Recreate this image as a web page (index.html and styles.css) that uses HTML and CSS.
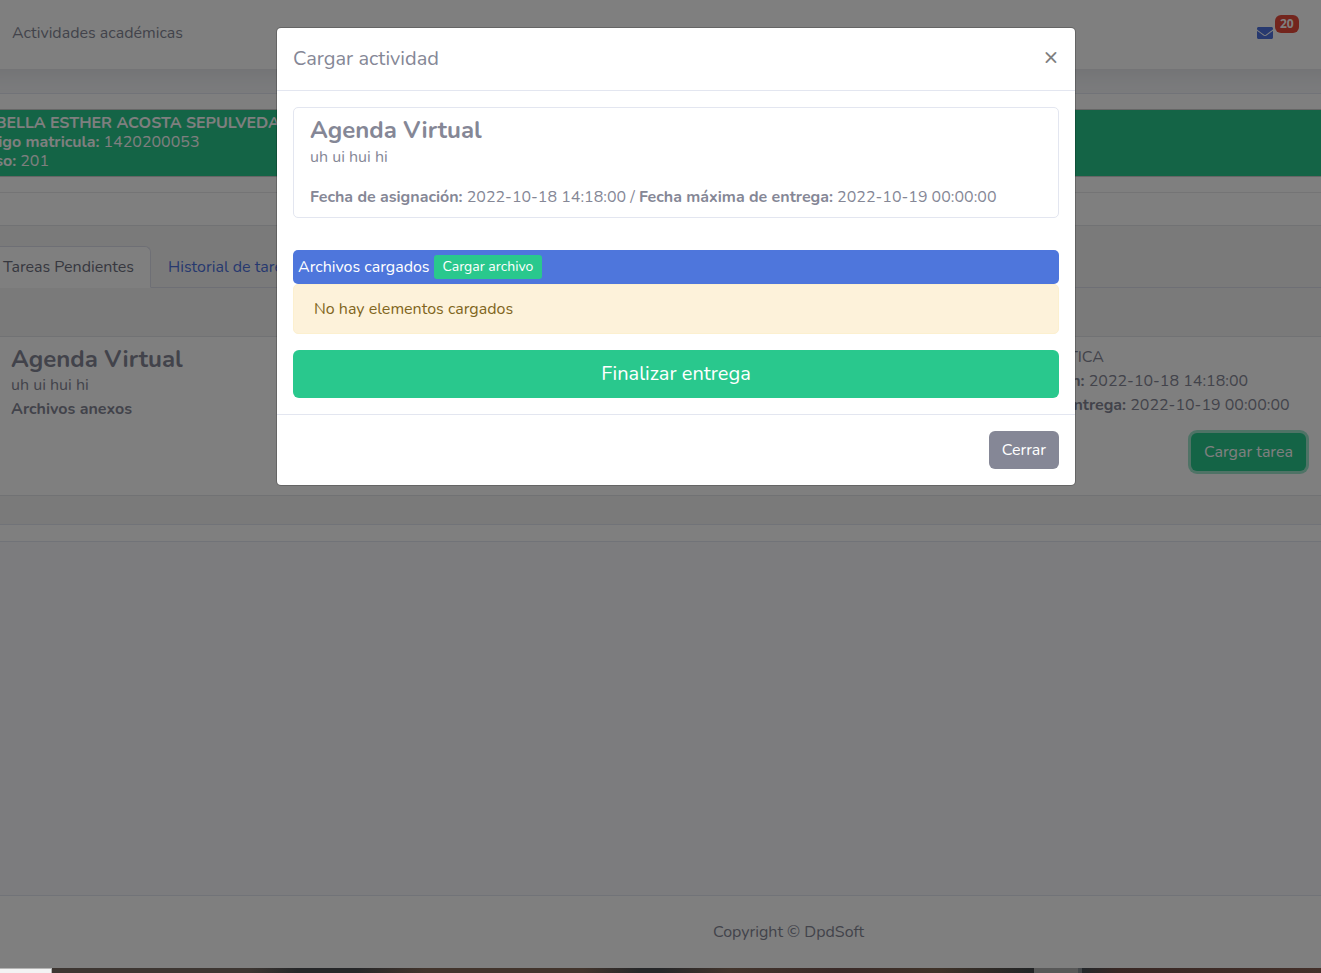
FILE: index.html
```html
<!DOCTYPE html>
<html lang="es">

<head>
    <meta charset="UTF-8">
    <meta name="viewport" content="width=device-width, initial-scale=1.0">
    <title>Actividades académicas</title>
    <link rel="stylesheet" href="styles.css">
</head>

<body>

    <div class="screen">
        <nav class="topbar">
            <span>Actividades académicas</span>
            <a href="#" class="messages" aria-label="Mensajes">
                <svg width="16" height="12" viewBox="0 0 512 384" aria-hidden="true">
                    <path fill="currentColor" d="M502.300 126.800c3.900-3.100 9.700-.2 9.700 4.700V336c0 26.500-21.500 48-48 48H48c-26.500 0-48-21.500-48-48V131.600c0-5 5.700-7.800 9.700-4.700 22.400 17.400 52.100 39.500 154.100 113.600 21.100 15.400 56.700 47.800 92.200 47.600 35.700.3 72-32.800 92.300-47.600 102-74.100 131.600-96.300 154-113.700zM256 256c23.200.4 56.600-29.200 73.400-41.400 132.700-96.300 142.800-104.700 173.400-128.700 5.800-4.500 9.200-11.500 9.200-18.900V48c0-26.500-21.500-48-48-48H48C21.500 0 0 21.500 0 48v19c0 7.400 3.400 14.300 9.200 18.900 30.600 23.900 40.700 32.400 173.400 128.700 16.800 12.200 50.200 41.800 73.400 41.400z"/>
                </svg>
                <span class="badge">20</span>
            </a>
        </nav>

        <main class="content">
            <div class="student-wrap">
                <div class="student">
                    <div><strong>ISABELLA ESTHER ACOSTA SEPULVEDA</strong></div>
                    <div><strong>Código matricula:</strong> 1420200053</div>
                    <div><strong>Curso:</strong> 201</div>
                </div>
            </div>
            <div class="spacer"></div>
            <div class="tasks">
                <div class="tabs">
                    <a href="#" class="tab active">Tareas Pendientes</a>
                    <a href="#" class="tab">Historial de tareas</a>
                </div>
                <div class="task">
                    <div>
                        <h4 class="task-title">Agenda Virtual</h4>
                        <div>uh ui hui hi</div>
                        <strong>Archivos anexos</strong>
                    </div>
                    <div class="task-info">
                        <div><strong>Materia :</strong> MATEMÁTICA</div>
                        <div><strong>Fecha de asignación:</strong> 2022-10-18 14:18:00</div>
                        <div><strong>Fecha máxima de entrega:</strong> 2022-10-19 00:00:00</div>
                        <button type="button" class="btn btn-success focus">Cargar tarea</button>
                    </div>
                </div>
            </div>
            <div class="card-end"></div>
        </main>

        <footer class="footer">Copyright © DpdSoft</footer>

        <div class="backdrop">
            <div class="modal" role="dialog" aria-labelledby="modal-title">
                <div class="modal-header">
                    <h5 id="modal-title" class="modal-title">Cargar actividad</h5>
                    <button type="button" class="close" aria-label="Close">×</button>
                </div>
                <div class="modal-body">
                    <div class="card">
                        <h4 class="task-title">Agenda Virtual</h4>
                        <div>uh ui hui hi</div>
                        <p class="dates"><strong>Fecha de asignación:</strong> 2022-10-18 14:18:00 / <strong>Fecha máxima de entrega:</strong> 2022-10-19 00:00:00</p>
                    </div>
                    <div class="files">
                        <span>Archivos cargados</span>
                        <button type="button" class="btn btn-success btn-sm">Cargar archivo</button>
                    </div>
                    <div class="alert">No hay elementos cargados</div>
                    <button type="button" class="btn btn-success btn-lg">Finalizar entrega</button>
                </div>
                <div class="modal-footer">
                    <button type="button" class="btn btn-secondary">Cerrar</button>
                </div>
            </div>
        </div>
    </div>

    <div class="taskbar">
        <div class="taskbar-search"></div>
        <div class="taskbar-apps"></div>
        <div class="taskbar-active"></div>
        <div class="taskbar-tray"></div>
    </div>

</body>

</html>
```

FILE: styles.css
```css
* {
    box-sizing: border-box;
}

body {
    margin: 0;
    height: 100vh;
    display: flex;
    flex-direction: column;
    overflow: hidden;
    font-family: Nunito, Lato, sans-serif;
    font-size: 16px;
    line-height: 24px;
    color: #858796;
    background: #f8f9fc;
}

h4,
h5,
p {
    margin: 0;
}

a {
    color: #4e73df;
    text-decoration: none;
}

.screen {
    position: relative;
    flex: 1;
    display: flex;
    flex-direction: column;
}

/* barra superior */
.topbar {
    display: flex;
    justify-content: space-between;
    padding: 21px 48px 24px 12px;
    background: #fff;
    box-shadow: 0 -26px 28px 28px rgba(58, 59, 69, 0.15);
}

.messages {
    position: relative;
    display: flex;
    align-items: center;
}

.badge {
    position: absolute;
    left: 18px;
    top: -6px;
    padding: 0 5px;
    border-radius: 6px;
    font-size: 12px;
    line-height: 18px;
    font-weight: bold;
    font-family: "Open Sans", sans-serif;
    color: #fff;
    background: #e74a3b;
}

/* contenido */
.content {
    flex: 1;
    margin-top: 24px;
}

.student-wrap {
    padding: 15px 0;
    background: #fff;
    border-top: 1px solid #e3e6f0;
    border-bottom: 1px solid #e8e8ea;
}

.student {
    margin-left: -31px;
    padding: 4px 0 5px;
    border: solid rgba(0, 0, 0, 0.2);
    border-width: 1px 0;
    line-height: 19px;
    color: #fff;
    background: #29c88d;
    background-clip: padding-box;
}

.spacer {
    height: 33px;
    background: #fff;
    border-bottom: 1px solid #e3e4e8;
}

.tasks {
    padding: 20px 0 28px;
    background: #f5f5f5;
}

.tabs {
    display: flex;
    margin-bottom: 48px;
    border-bottom: 1px solid #dddfeb;
}

.tab {
    padding: 8px 16px;
    margin-bottom: -1px;
    border: 1px solid transparent;
    border-radius: 0 6px 0 0;
}

.tab.active {
    padding-left: 3px;
    color: #6e707e;
    background: #fff;
    border-color: #dddfeb #dddfeb #fff;
    border-left: 0;
}

.task {
    display: flex;
    justify-content: space-between;
    padding: 8px 15px 24px 11px;
    background: #fff;
    border: solid #e3e4e8;
    border-width: 1px 0;
}

.task-title {
    font-size: 24px;
    line-height: 29px;
}

.task .task-title {
    line-height: 28px;
}

.task-info {
    display: flex;
    flex-direction: column;
    width: 374px;
}

.task-info .btn {
    align-self: flex-end;
    margin-top: 16px;
}

.card-end {
    height: 18px;
    background: #fff;
    border: solid #e3e6f0;
    border-width: 1px 0;
}

.footer {
    padding: 24px 0 24px 256px;
    text-align: center;
    background: #fff;
    border-top: 1px solid #e3e6f0;
}

/* botones */
.btn {
    padding: 6px 12px;
    border: 1px solid transparent;
    border-radius: 6px;
    font: inherit;
    color: #fff;
    cursor: pointer;
}

.btn-success {
    background: #29c88d;
}

.btn-secondary {
    background: #858796;
}

.btn-sm {
    padding: 0 8px;
    border-radius: 3px;
    font-size: 14px;
    line-height: 22px;
}

.btn-lg {
    width: 100%;
    padding: 8px 16px;
    font-size: 20px;
    line-height: 30px;
}

.btn.focus {
    box-shadow: 0 0 0 3px rgba(62, 208, 156, 0.5);
}

/* modal */
.backdrop {
    position: absolute;
    inset: 0;
    padding: 27px 0 0 31px;
    background: rgba(0, 0, 0, 0.5);
}

.modal {
    max-width: 800px;
    margin: 0 auto;
    background: #fff;
    background-clip: padding-box;
    border: 1px solid rgba(0, 0, 0, 0.2);
    border-radius: 5px;
}

.modal-header {
    display: flex;
    justify-content: space-between;
    padding: 16px;
    border-bottom: 1px solid #e3e6f0;
}

.modal-title {
    font-size: 20px;
    line-height: 30px;
    font-weight: normal;
}

.close {
    align-self: flex-start;
    padding: 0;
    width: 16px;
    border: 0;
    background: none;
    font: 600 24px/24px Nunito, Lato, sans-serif;
    color: #7f7f7f;
    cursor: pointer;
}

.modal-body {
    padding: 16px;
}

.card {
    padding: 8px 16px;
    border: 1px solid #e3e6f0;
    border-radius: 5px;
}

.dates {
    margin-top: 16px;
}

.files {
    display: flex;
    align-items: center;
    gap: 4px;
    margin-top: 32px;
    padding: 5px;
    border-radius: 5px;
    color: #fff;
    background: #4e76dc;
}

.alert {
    margin-bottom: 16px;
    padding: 12px 20px;
    border: 1px solid #fcf0cf;
    border-radius: 5px;
    color: #806520;
    background: #fdf2da;
}

.modal-footer {
    display: flex;
    justify-content: flex-end;
    padding: 16px;
    border-top: 1px solid #e3e6f0;
}

/* barra de tareas */
.taskbar {
    display: flex;
    height: 5px;
}

.taskbar-search {
    width: 52px;
    background: #f3f3f3;
    border: solid #b5b5b5;
    border-width: 1px 1px 0 0;
}

.taskbar-apps {
    flex: 1;
    background: linear-gradient(90deg, #3d3632 0 20%, #262729 25% 31%, #42342c 38% 54%, #262729 60% 62%, #42342c 69%, #3a2a28 80%, #3f3228 90%, #222426);
}

.taskbar-active {
    width: 48px;
    background: #585858;
    border-right: 4px solid #44474a;
}

.taskbar-tray {
    width: 239px;
    background: linear-gradient(90deg, #24282b, #382724 15%, #43302a);
}
```
